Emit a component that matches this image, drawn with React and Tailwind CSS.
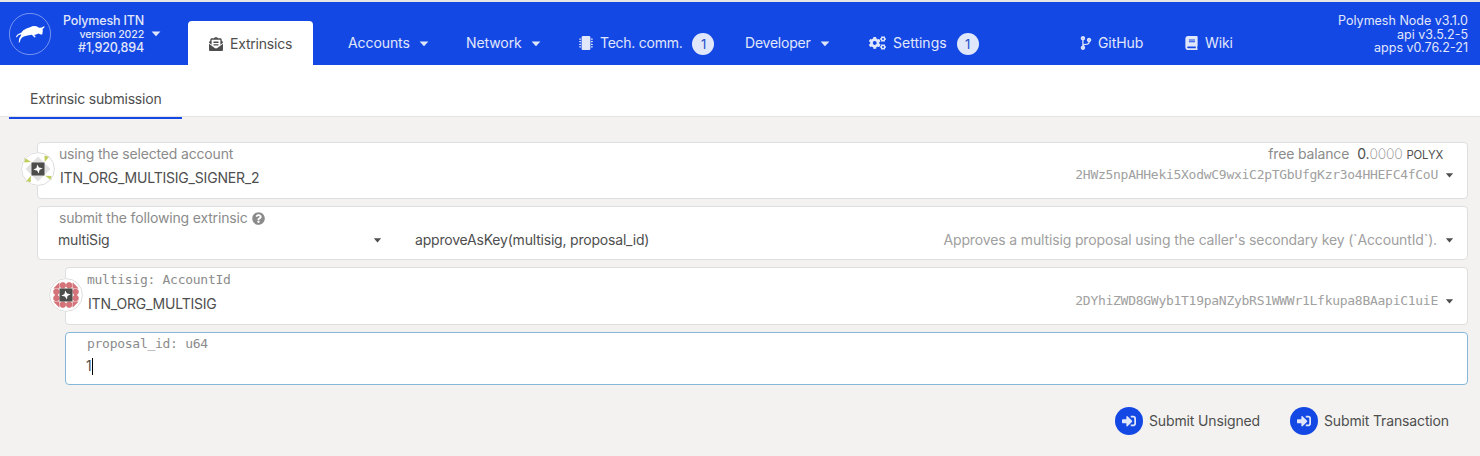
import { FaEnvelopeOpenText, FaMicrochip, FaCogs, FaCodeBranch, FaBook, FaQuestionCircle, FaSignInAlt } from "react-icons/fa";

function Caret({ className = "" }) {
  return (
    <svg viewBox="0 0 10 6" className={`shrink-0 ${className}`} fill="currentColor">
      <path d="M0.6 0.4h8.8L5 5.3z" />
    </svg>
  );
}

function Bull() {
  return (
    <svg viewBox="0 0 42 42" className="h-[42px] w-[42px] shrink-0">
      <circle cx="21" cy="21" r="20.6" fill="none" stroke="#fff" strokeOpacity="0.6" strokeWidth="0.7" />
      <path
        fill="#fff"
        d="M7 23.500L8.500 21.500 12.500 19.500 14 17.500 17.500 15.500 21 14.200 24 13 27.500 13.200 30 14.800 33 14.600 35.200 13 35.400 14.400 33.600 16 33.800 18.200 33.200 21.400 31.800 21.600 29.500 20.400 27.200 21.400 25.200 22 26.800 24 25.600 24.400 22.800 21.800 18.500 22.400 15.500 23.200 13 24.400 11.600 26.600 10.600 29.600 9.700 29.400 10.200 25.600 12 22.600 12.200 21.200 9.400 22.200 7.600 24.600z"
      />
    </svg>
  );
}

function Sparkle() {
  return (
    <g transform="translate(17 17)">
      <rect x="-6.500" y="-6.500" width="13" height="13" fill="#4d4d4b" />
      <path d="M-.8-4.600L1-1.500 4.700-.8 1.500 1 .8 4.600-1 1.500-4.700.8-1.500-1z" fill="#fff" />
    </g>
  );
}

function GreenIdenticon() {
  return (
    <svg viewBox="0 0 34 34" className="h-[34px] w-[34px]">
      <path d="M17 4.500L29.500 17 17 29.500 4.500 17z" fill="#e2e2e2" />
      <path
        d="M3.600 5.600L10 10l-6.700.4zM23.400 3.800l5 .6-4.600 5.500zM24.200 23.800l6.200.2-.2 4.500zM4.800 29.700l5-5.900v6.200z"
        fill="#c0ce5c"
      />
      <circle cx="17" cy="17" r="16.400" fill="none" stroke="#ddd" />
      <Sparkle />
    </svg>
  );
}

const dots = [
  [-3.2, -9.6], [3.2, -9.6], [-3.2, 9.6], [3.2, 9.6],
  [-9.6, -3.2], [-9.6, 3.2], [9.6, -3.2], [9.6, 3.2],
];

function RedIdenticon() {
  return (
    <svg viewBox="0 0 34 34" className="h-[34px] w-[34px]">
      <g fill="#d4747a">
        {dots.map(([x, y]) => (
          <path
            key={`${x},${y}`}
            transform={`translate(${17 + x} ${17 + y})`}
            d="M-1.300-3.100h2.600L3.100-1.300v2.600L1.300 3.100h-2.600L-3.100 1.300v-2.600z"
          />
        ))}
        <path d="M10.400 4.300v6.100H4.300zM23.600 4.300v6.100h6.100zM10.400 29.700v-6.100H4.300zM23.600 29.700v-6.100h6.100z" />
      </g>
      <circle cx="17" cy="17" r="16.400" fill="none" stroke="#ddd" />
      <Sparkle />
    </svg>
  );
}

function Avatar({ className, children }) {
  return <div className={`absolute -left-[17px] rounded-full bg-white ${className}`}>{children}</div>;
}

function Badge({ className }) {
  return (
    <span className={`mt-[2px] flex h-[22px] w-[22px] items-center justify-center rounded-full bg-[#e1e7fa] text-[13px] text-[#2450c8] ${className}`}>
      1
    </span>
  );
}

function NavItem({ className, icon, label, caret, badge }) {
  return (
    <div className={`flex h-[44px] shrink-0 items-center ${className}`}>
      {icon}
      <span>{label}</span>
      {caret && <Caret className="ml-[9px] mt-px h-[6px] w-[10px]" />}
      {badge && <Badge className={badge} />}
    </div>
  );
}

function Header() {
  return (
    <header className="flex h-[65px] border-t-2 border-[#e6e6e6] bg-[#1348e4] tracking-[-0.09px] text-[#e1e7fa]">
      <div className="flex w-[188px] shrink-0 pl-[9px] pt-[11px]">
        <Bull />
        <div className="flex w-[93px] flex-col items-end whitespace-nowrap pt-px text-[12.500px] leading-[13.500px] font-medium tracking-[-0.17px]">
          <span>Polymesh ITN</span>
          <span className="text-[10.600px]">version 2022</span>
          <span>#1,920,894</span>
        </div>
        <Caret className="ml-[7px] mt-[18px] h-[6px] w-[10px]" />
      </div>
      <nav className="flex flex-1 pt-[19px]">
        <div className="flex h-[44px] w-[125px] shrink-0 items-center rounded-t bg-white pl-[21px] pt-px text-[#4e4e4e]">
          <FaEnvelopeOpenText className="mr-[7px] h-[14px] w-[14px]" />
          <span className="tracking-[-0.2px]">Extrinsics</span>
        </div>
        <NavItem className="ml-[35px] w-[118px]" label="Accounts" caret />
        <NavItem className="w-[113px]" label="Network" caret />
        <NavItem className="w-[166px] tracking-[-0.26px]" icon={<FaMicrochip className="mr-[7px] h-[14px] w-[14px]" />} label="Tech. comm." badge="ml-[10px]" />
        <NavItem className="w-[124px] tracking-[-0.22px]" label="Developer" caret />
        <NavItem className="w-[211px] tracking-normal" icon={<FaCogs className="mr-[7px] h-[14px] w-[17px]" />} label="Settings" badge="ml-[10px]" />
        <NavItem className="w-[105px]" icon={<FaCodeBranch className="mr-[6px] h-[14px] w-[12px]" />} label="GitHub" />
        <NavItem icon={<FaBook className="mr-[7px] h-[14px] w-[13px]" />} label="Wiki" />
      </nav>
      <div className="flex shrink-0 flex-col items-end whitespace-nowrap pr-[12px] pt-[12px] text-[12.500px] leading-[13.500px] tracking-normal">
        <span>Polymesh Node v3.1.0</span>
        <span>api v3.5.2-5</span>
        <span>apps v0.76.2-21</span>
      </div>
    </header>
  );
}

const card = "relative rounded border bg-white";
const mono = "font-['DejaVu_Sans_Mono',monospace] text-[13px] tracking-[-0.27px]";

function Address({ children }) {
  return (
    <span className="flex items-center gap-[7px]">
      <span className={`${mono} text-[#a0a0a0]`}>{children}</span>
      <Caret className="h-[5px] w-[9px]" />
    </span>
  );
}

function Submit({ label }) {
  return (
    <button className="flex items-center gap-[6px] tracking-[-0.14px]">
      <span className="flex h-7 w-7 items-center justify-center rounded-full bg-[#1348e4] text-[#e1e7fa]">
        <FaSignInAlt className="h-[14px] w-[14px]" />
      </span>
      <span>{label}</span>
    </button>
  );
}

export default function App() {
  return (
    <div className="h-[456px] w-[1480px] overflow-hidden bg-[#f3f2f1] font-[Inter,sans-serif] text-[14px] leading-[20px] tracking-[-0.2px] text-[#4e4e4e]">
      <Header />
      <div className="h-[54px] bg-[linear-gradient(#fff_51px,#e4e4e4_51px,#e4e4e4_52px,#f3f2f1_52px)] pl-[9px]">
        <div className="flex h-[54px] w-[173px] border-b-2 border-[#1348e4] pl-[21px] pt-[24px]">Extrinsic submission</div>
      </div>
      <main className="flex flex-col gap-[7px] pl-[37px] pr-[12px] pt-[23px]">
        <section className={`${card} h-[57px] border-[#dededf]`}>
          <Avatar className="top-[9px]"><GreenIdenticon /></Avatar>
          <div className="flex h-[21px] justify-between pl-[21px] pr-[24px] pt-px tracking-[-0.16px] text-[#8b8b8b]">
            <span>using the selected account</span>
            <span className="flex items-baseline">
              free balance
              <span className="ml-[8px] text-[#4e4e4e]">0.</span>
              <span className="font-extralight">0000</span>
              <span className="ml-[4px] text-[11.300px] text-[#4e4e4e]">POLYX</span>
            </span>
          </div>
          <div className="flex items-start justify-between pl-[22px] pr-[13px]">
            <span className="pt-[4px]">ITN_ORG_MULTISIG_SIGNER_2</span>
            <span className="pt-px"><Address>2HWz5npAHHeki5XodwC9wxiC2pTGbUfgKzr3o4HHEFC4fCoU</Address></span>
          </div>
        </section>
        <section className={`${card} h-[54px] border-[#dededf] pl-[20px] pr-[13px] pt-px`}>
          <div className="flex items-center gap-[5px] pl-px tracking-[-0.16px] text-[#8b8b8b]">
            submit the following extrinsic <FaQuestionCircle className="-ml-px h-[13px] w-[13px]" />
          </div>
          <div className="flex items-center pt-[2px]">
            <span className="w-[315px]">multiSig</span>
            <Caret className="h-[5px] w-[9px]" />
            <span className="ml-[33px] flex-1">approveAsKey(multisig, proposal_id)</span>
            <span className="tracking-[-0.14px] text-[#a0a0a0]">Approves a multisig proposal using the caller's secondary key (`AccountId`).</span>
            <Caret className="ml-[8px] h-[5px] w-[9px]" />
          </div>
        </section>
        <section className={`${card} ml-[28px] h-[58px] border-[#dededf]`}>
          <Avatar className="top-[10px]"><RedIdenticon /></Avatar>
          <div className={`h-[22px] pl-[21px] pt-[2px] text-[#8b8b8b] ${mono}`}>multisig: AccountId</div>
          <div className="flex items-start justify-between pl-[22px] pr-[13px]">
            <span className="pt-[4px]">ITN_ORG_MULTISIG</span>
            <span className="pt-px"><Address>2DYhiZWD8GWyb1T19paNZybRS1WWWr1Lfkupa8BAapiC1uiE</Address></span>
          </div>
        </section>
        <section className={`${card} ml-[28px] h-[53px] border-[#85b7d9] pl-[21px]`}>
          <div className={`pt-px text-[#8b8b8b] ${mono}`}>proposal_id: u64</div>
          <div className="-ml-px flex items-center pt-[2px]">1<span className="h-[17px] w-px bg-black" /></div>
        </section>
      </main>
      <div className="flex justify-end gap-[30px] pr-[31px] pt-[22px]">
        <Submit label="Submit Unsigned" />
        <Submit label="Submit Transaction" />
      </div>
    </div>
  );
}
